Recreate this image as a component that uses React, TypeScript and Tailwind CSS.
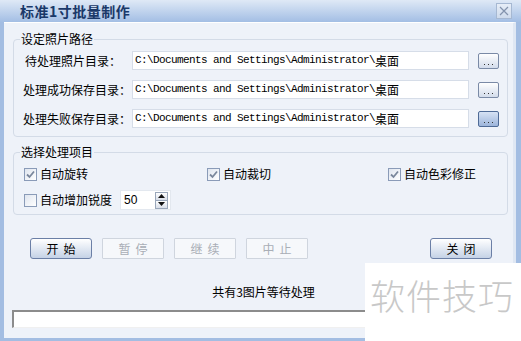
import React from "react";

function Check({ checked, label }: { checked: boolean; label: string }) {
  return (
    <div className="flex items-center h-[16px]">
      <div className="w-[13px] h-[13px] border border-[#8a9bb8] bg-linear-to-br from-[#dfe5ef] to-[#ffffff] flex items-center justify-center">
        {checked && (
          <svg width="9" height="9" viewBox="0 0 9 9">
            <path d="M1 4.5 L3.5 7 L8 1.5" fill="none" stroke="#7a879c" strokeWidth="1.8" />
          </svg>
        )}
      </div>
      <span className="ml-[3px] leading-[16px]">{label}</span>
    </div>
  );
}

function PathRow({ label, first, active }: { label: string; first?: boolean; active?: boolean }) {
  return (
    <div className="flex items-center h-[19px]">
      <div className={"w-[109px] shrink-0 leading-[16px] " + (first ? "pl-[2px]" : "")}>{label}</div>
      <div className="flex-1 h-[19px] bg-white border border-[#d6dde8] flex items-center pl-[2px] font-['Liberation_Mono','Noto_Sans_CJK_SC',monospace] text-[11px] tracking-[-0.6px] leading-[17px] overflow-hidden whitespace-nowrap">
        C:\Documents and Settings\Administrator\<span className="font-['Noto_Sans_CJK_SC',sans-serif] text-[12px] tracking-normal">桌面</span>
      </div>
      <div
        className={
          "ml-[9px] w-[21px] h-[16px] rounded-[2px] border flex items-end justify-center pb-[2px] " +
          (active
            ? "border-[#4e6a96] bg-linear-to-b from-[#d6e2f4] to-[#9db5db]"
            : "border-[#7a8aa6] bg-linear-to-b from-[#ffffff] to-[#d3dceb]")
        }
      >
        <svg width="9" height="2" viewBox="0 0 9 2">
          <rect x="0" y="0" width="1" height="1" fill="#333" />
          <rect x="4" y="0" width="1" height="1" fill="#333" />
          <rect x="8" y="0" width="1" height="1" fill="#333" />
        </svg>
      </div>
    </div>
  );
}

function Btn({ label, enabled }: { label: string; enabled: boolean }) {
  return (
    <div
      className={
        "w-[62px] h-[21px] flex items-center justify-center tracking-[5px] pl-[5px] leading-[14px] " +
        (enabled
          ? "rounded-[3px] border border-[#6b7fa6] bg-linear-to-b from-[#ffffff] to-[#c5d2e6] text-black"
          : "rounded-[1px] border border-[#cfd5de] bg-[#f6f8fb] text-[#a9aeb6]")
      }
    >
      {label}
    </div>
  );
}

export default function App() {
  return (
    <div className="relative w-[521px] h-[341px] overflow-hidden bg-[#a3bde2] flex flex-col font-['Noto_Sans_CJK_SC',sans-serif] text-[12px] text-black">
      {/* title bar */}
      <div className="h-[22px] shrink-0 flex items-center pl-[20px] pr-[9px] bg-linear-to-b from-[#dfe9f6] to-[#a3bee4]">
        <span className="font-bold text-[14px] leading-[16px] text-[#1a3868] tracking-[0.5px]">标准1寸批量制作</span>
        <div className="ml-auto w-[16px] h-[16px] border border-[#a6b8d2] bg-linear-to-b from-[#e6edf7] to-[#cfdbec] flex items-center justify-center">
          <svg width="10" height="10" viewBox="0 0 10 10">
            <path d="M1 1 L9 9 M9 1 L1 9" stroke="#8393ad" strokeWidth="1.2" />
          </svg>
        </div>
      </div>

      {/* body */}
      <div className="flex-1 ml-[4px] mr-[5px] mb-[3px] bg-[#eef2f9] border-t border-r-[3px] border-t-[#ffffff] border-r-[#dfe7f3] flex flex-col pl-[9px] pr-[5px] pt-[9px]">
        <fieldset className="border border-[#d3dbe7] rounded-[4px] px-0 flex flex-col gap-[10px] pt-[5px] pb-[8px] pl-[9px] pr-[8px]">
          <legend className="ml-[-3px] px-[1px] leading-[14px]">设定照片路径</legend>
          <PathRow label="待处理照片目录：" first />
          <PathRow label="处理成功保存目录：" />
          <PathRow label="处理失败保存目录：" active />
        </fieldset>

        <fieldset className="mt-[8px] border border-[#d3dbe7] rounded-[4px] flex flex-col pt-[7px] pb-[4px] pl-[10px] pr-[8px]">
          <legend className="ml-[-4px] px-[1px] leading-[14px]">选择处理项目</legend>
          <div className="flex items-center h-[16px]">
            <div className="w-[183px]"><Check checked label="自动旋转" /></div>
            <div className="w-[181px]"><Check checked label="自动裁切" /></div>
            <div><Check checked label="自动色彩修正" /></div>
          </div>
          <div className="flex items-center h-[20px] mt-[8px]">
            <Check checked={false} label="自动增加锐度" />
            <div className="ml-[8px] w-[51px] h-[20px] bg-white border border-[#e3e8ef] flex items-center">
              <span className="pl-[3px] flex-1 font-['Liberation_Sans',sans-serif] text-[12px] leading-[14px]">50</span>
              <div className="w-[13px] h-[17px] mr-[2px] flex flex-col border border-[#9aa7ba]">
                <div className="flex-1 bg-linear-to-b from-[#ffffff] to-[#d8dee8] flex items-center justify-center border-b border-[#9aa7ba]">
                  <svg width="7" height="4" viewBox="0 0 7 4"><path d="M0 4 L3.5 0 L7 4 Z" fill="#111" /></svg>
                </div>
                <div className="flex-1 bg-linear-to-b from-[#ffffff] to-[#d8dee8] flex items-center justify-center">
                  <svg width="7" height="4" viewBox="0 0 7 4"><path d="M0 0 L3.5 4 L7 0 Z" fill="#111" /></svg>
                </div>
              </div>
            </div>
          </div>
        </fieldset>

        <div className="mt-[23px] flex items-center gap-[10px] pl-[17px] pr-[16px]">
          <Btn label="开始" enabled />
          <Btn label="暂停" enabled={false} />
          <Btn label="继续" enabled={false} />
          <Btn label="中止" enabled={false} />
          <div className="ml-auto"><Btn label="关闭" enabled /></div>
        </div>

        <div className="mt-[26px] text-center pl-[6px] leading-[14px]">共有3图片等待处理</div>

        <div className="mt-[11px] -ml-[1px] h-[18px] bg-white border-t-2 border-l-2 border-t-[#8c8c8c] border-l-[#8c8c8c] border-r border-b border-r-[#f0f0f0] border-b-[#f0f0f0]" />
      </div>

      {/* watermark */}
      <div className="absolute left-[365px] top-[263px] right-0 bottom-0 bg-white flex items-start pl-[5px] pt-[12px]">
        <span className="text-[35px] font-light leading-[40px] text-[#c8c8c8] tracking-[1px] whitespace-nowrap">软件技巧</span>
      </div>
    </div>
  );
}
